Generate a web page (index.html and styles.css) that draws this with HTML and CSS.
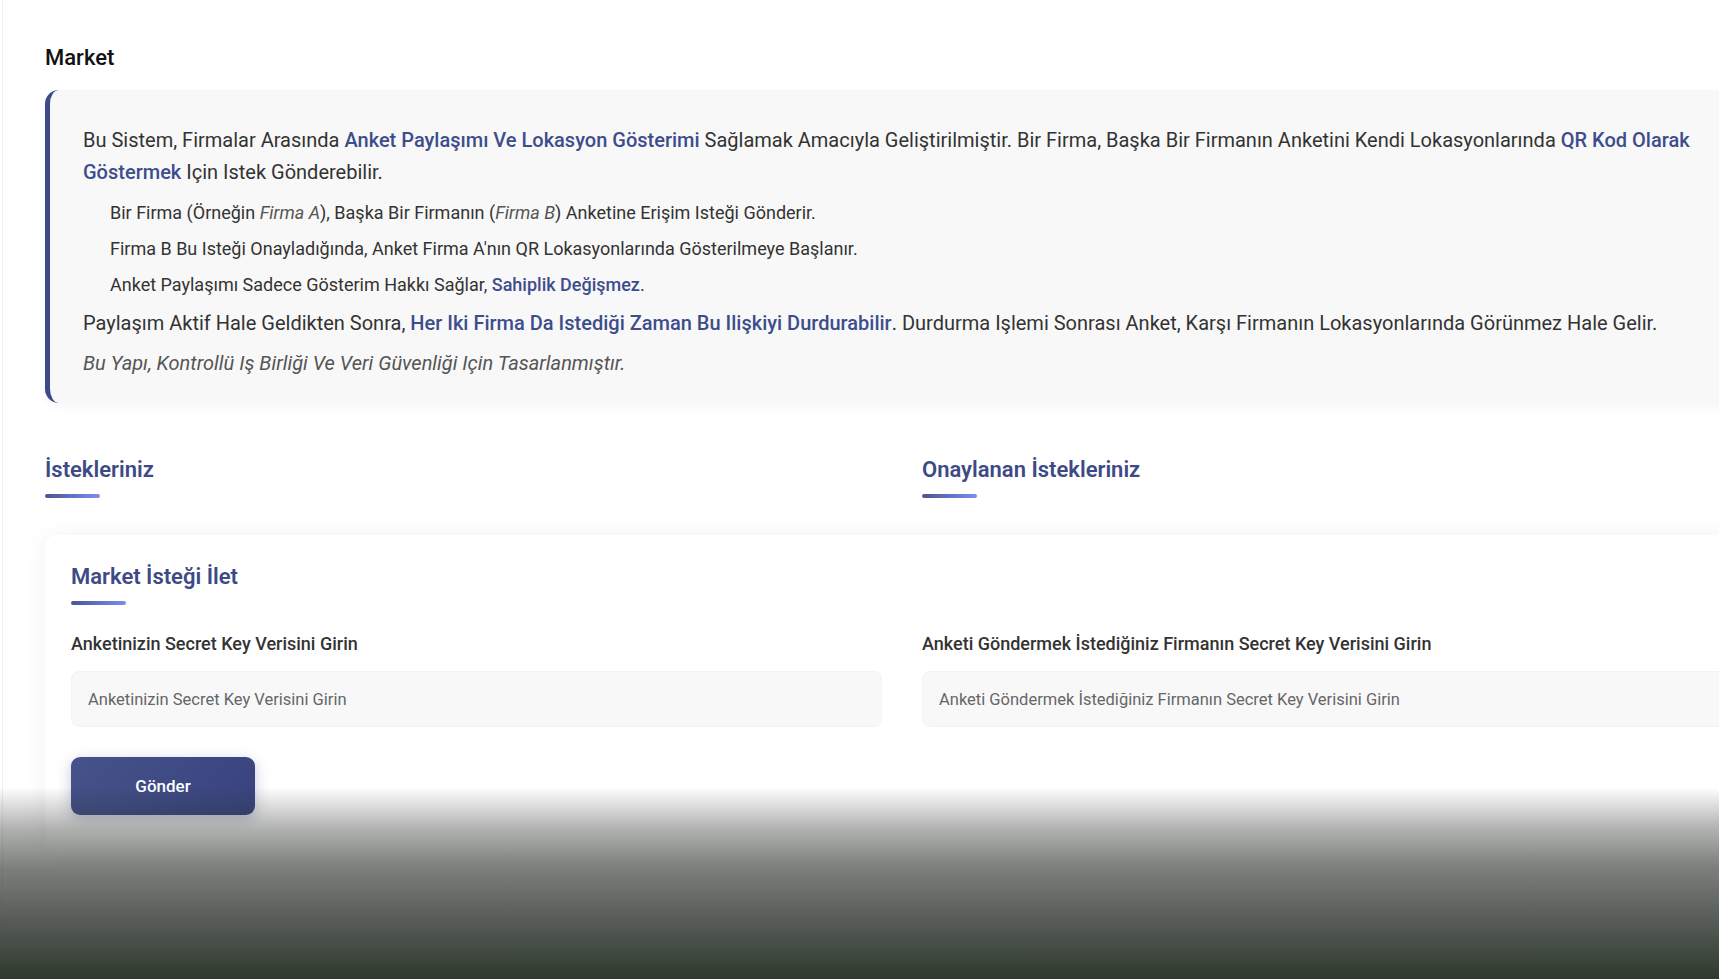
FILE: index.html
```html
<!DOCTYPE html>
<html lang="tr">
<head>
  <meta charset="UTF-8">
  <meta name="viewport" content="width=device-width, initial-scale=1">
  <title>Market</title>
  <link rel="stylesheet" href="styles.css">
</head>
<body>

  <div class="page">
    <main class="content">
      <h1 class="page-title">Market</h1>

      <section class="info-box">
        <p>Bu Sistem, Firmalar Arasında <b class="hl">Anket Paylaşımı Ve Lokasyon Gösterimi</b> Sağlamak Amacıyla Geliştirilmiştir. Bir Firma, Başka Bir Firmanın Anketini Kendi Lokasyonlarında <b class="hl">QR Kod Olarak Göstermek</b> Için Istek Gönderebilir.</p>
        <ul>
          <li>Bir Firma (Örneğin <i>Firma A</i>), Başka Bir Firmanın (<i>Firma B</i>) Anketine Erişim Isteği Gönderir.</li>
          <li>Firma B Bu Isteği Onayladığında, Anket Firma A'nın QR Lokasyonlarında Gösterilmeye Başlanır.</li>
          <li>Anket Paylaşımı Sadece Gösterim Hakkı Sağlar, <b class="hl">Sahiplik Değişmez</b>.</li>
        </ul>
        <p>Paylaşım Aktif Hale Geldikten Sonra, <b class="hl">Her Iki Firma Da Istediği Zaman Bu Ilişkiyi Durdurabilir</b>. Durdurma Işlemi Sonrası Anket, Karşı Firmanın Lokasyonlarında Görünmez Hale Gelir.</p>
        <p class="note">Bu Yapı, Kontrollü Iş Birliği Ve Veri Güvenliği Için Tasarlanmıştır.</p>
      </section>

      <div class="tabs">
        <div class="tab">
          <h2 class="section-title">İstekleriniz</h2>
          <span class="bar"></span>
        </div>
        <div class="tab">
          <h2 class="section-title">Onaylanan İstekleriniz</h2>
          <span class="bar"></span>
        </div>
      </div>

      <section class="card">
        <h2 class="section-title">Market İsteği İlet</h2>
        <span class="bar"></span>

        <div class="form-grid">
          <div class="field">
            <label for="own-key">Anketinizin Secret Key Verisini Girin</label>
            <input type="text" id="own-key" placeholder="Anketinizin Secret Key Verisini Girin">
          </div>
          <div class="field">
            <label for="target-key">Anketi Göndermek İstediğiniz Firmanın Secret Key Verisini Girin</label>
            <input type="text" id="target-key" placeholder="Anketi Göndermek İstediğiniz Firmanın Secret Key Verisini Girin">
          </div>
        </div>

        <button class="send-btn">Gönder</button>
      </section>
    </main>
  </div>

  <div class="fade"></div>

</body>
</html>
```

FILE: styles.css
```css
* {
  box-sizing: border-box;
}

html, body {
  margin: 0;
  padding: 0;
  overflow: hidden;
}

body {
  font-family: Roboto, "Liberation Sans", sans-serif;
  background: #fff;
  color: #333;
}

.page {
  margin-left: 2px;
  border-left: 1px solid #f0f0f0;
  min-height: 979px;
}

.content {
  width: 1714px;
  margin-left: 42px;
  padding-top: 44px;
}

.page-title {
  margin: 0 0 18px;
  font-size: 22px;
  font-weight: 500;
  line-height: 28px;
  color: #111;
}

/* info box */
.info-box {
  background: #f8f8f8;
  border-left: 5px solid #3d4a88;
  border-radius: 14px 0 0 14px;
  padding: 34px 36px 24px 33px;
  box-shadow: 0 4px 10px rgba(0, 0, 0, 0.04);
}

.info-box p {
  margin: 0;
  font-size: 20px;
  line-height: 32px;
  color: #333;
}

.info-box ul {
  list-style: none;
  margin: 12px 0 9px;
  padding-left: 27px;
}

.info-box li {
  font-size: 18px;
  line-height: 26px;
  margin-bottom: 10px;
  color: #333;
}

.info-box li:last-child {
  margin-bottom: 0;
}

.info-box i {
  color: #555;
}

.hl {
  color: #3d4d8c;
  font-weight: 500;
}

.info-box .note {
  margin-top: 8px;
  font-style: italic;
  color: #555;
}

/* section headers */
.tabs {
  display: grid;
  grid-template-columns: 1fr 1fr;
  gap: 40px;
  margin-top: 53px;
}

.section-title {
  margin: 0;
  font-size: 22px;
  font-weight: 600;
  line-height: 28px;
  color: #3d4a85;
}

.bar {
  display: block;
  width: 55px;
  height: 4px;
  margin-top: 10px;
  border-radius: 2px;
  background: linear-gradient(90deg, #4a5494, #7b8ef0);
}

/* card */
.card {
  margin-top: 37px;
  background: #fff;
  border-radius: 12px;
  padding: 28px 26px 40px;
  box-shadow: 0 0 24px rgba(0, 0, 0, 0.05);
}

.form-grid {
  display: grid;
  grid-template-columns: 1fr 1fr;
  gap: 40px;
  margin-top: 28px;
}

.field label {
  display: block;
  font-size: 18px;
  font-weight: 500;
  line-height: 22px;
  color: #333;
  margin-bottom: 16px;
}

.field input {
  width: 100%;
  height: 56px;
  padding: 0 16px;
  font-family: inherit;
  font-size: 16.5px;
  color: #333;
  background: #f8f8f8;
  border: 1px solid #f3f3f3;
  border-radius: 8px;
  outline: none;
}

.field input::placeholder {
  color: #666;
}

.send-btn {
  margin-top: 30px;
  width: 184px;
  height: 58px;
  font-family: inherit;
  font-size: 17px;
  font-weight: 500;
  color: #fff;
  background: linear-gradient(135deg, #46528a, #38437e);
  border: none;
  border-radius: 9px;
  box-shadow: 0 4px 14px rgba(58, 69, 128, 0.3);
  cursor: pointer;
}

.send-btn:hover {
  background: #323c70;
}

/* bottom fade overlay */
.fade {
  position: fixed;
  left: 0;
  right: 0;
  bottom: 0;
  height: 192px;
  pointer-events: none;
  background: linear-gradient(180deg,
    rgba(45, 50, 45, 0) 0%,
    rgba(45, 50, 45, 0.38) 22%,
    rgba(45, 50, 45, 0.63) 43%,
    rgba(45, 50, 45, 0.79) 68%,
    rgba(45, 58, 45, 1) 100%);
}
```
